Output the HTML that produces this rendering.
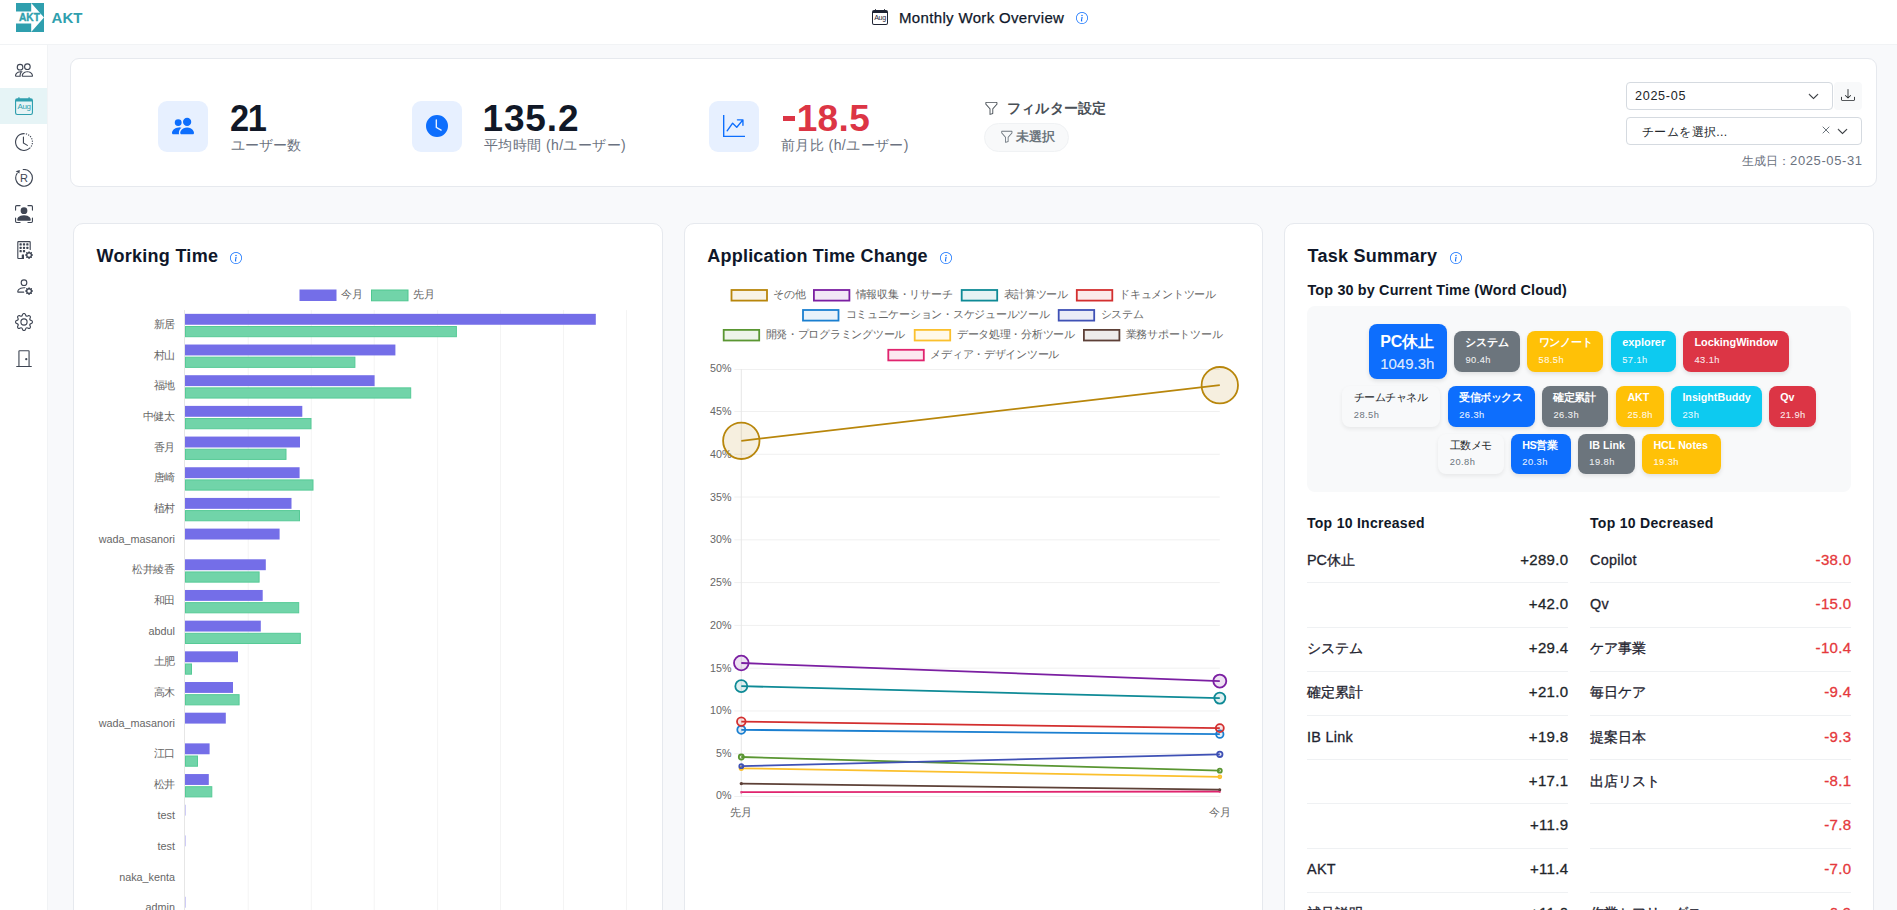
<!DOCTYPE html>
<html lang="ja">
<head>
<meta charset="utf-8">
<title>Monthly Work Overview</title>
<style>
*{box-sizing:border-box;margin:0;padding:0}
html,body{width:1897px;height:910px;overflow:hidden;background:#f8f9fb;font-family:"Liberation Sans",sans-serif;color:#111827}
.abs{position:absolute}
#root{position:relative;width:1897px;height:910px;overflow:hidden;background:#f8f9fb}
#hdr{left:0;top:0;width:1897px;height:45px;background:#fff;border-bottom:1px solid #f1f3f5}
#side{left:0;top:45px;width:48px;height:865px;background:#fff;border-right:1px solid #f1f3f5}
.sic{position:absolute;left:0;width:47px;height:36px}
.sic svg{position:absolute;left:15px;top:9px;width:18px;height:18px;fill:#3f4654}
.sic.act{background:#e6f4f6}
.sic.act svg{fill:#2f9fae}
.card{position:absolute;background:#fff;border:1px solid #e6e9ee;border-radius:10px}
.ibox{position:absolute;width:50px;height:51px;border-radius:9px;background:#e7f0ff}
.ibox svg{position:absolute;left:14px;top:14px;width:22px;height:22px;fill:#0d6efd}
.num{position:absolute;font-weight:700;font-size:37px;line-height:40px;color:#111827;white-space:nowrap;letter-spacing:-1px}
.lbl{position:absolute;font-size:14px;line-height:18px;color:#6b7280;white-space:nowrap}
.h2{position:absolute;font-weight:700;font-size:18px;line-height:24px;color:#0f172a;white-space:nowrap}
.info{position:absolute;width:12px;height:12px;fill:#0d6efd}
.t{position:absolute;white-space:nowrap}
.th{font-size:14px;line-height:18px;font-weight:700;color:#111827}
.tn{font-size:14.4px;line-height:20px;color:#1f2430;-webkit-text-stroke:.3px #1f2430}
.tv{font-size:15px;line-height:20px;letter-spacing:.3px;margin-right:-.3px;-webkit-text-stroke:.3px}
.tag{overflow:hidden}
</style>
</head>
<body>
<div id="root">
<!-- HEADER -->
<div id="hdr" class="abs">
<svg class="abs" style="left:16px;top:3px" width="28" height="29" viewBox="0 0 28 29"><rect width="28" height="29" fill="#2f9fae"/><path d="M0 8.6H15.2V0L28 14.5 15.2 29V20.4H0Z" fill="#fff"/><text x="13.4" y="18.3" font-family="Liberation Sans, sans-serif" font-weight="700" font-size="10.2" fill="#2f9fae" stroke="#2f9fae" stroke-width=".35" text-anchor="middle">AKT</text></svg>
<div class="t" style="left:51.6px;top:9px;font-size:15px;line-height:18px;font-weight:700;color:#2f9fae;letter-spacing:0">AKT</div>
<svg class="abs" style="left:872px;top:9px" width="16" height="16" viewBox="0 0 16 16"><path d="M3.5 0a.5.5 0 0 1 .5.5V1h8V.5a.5.5 0 0 1 1 0V1h1a2 2 0 0 1 2 2v11a2 2 0 0 1-2 2H2a2 2 0 0 1-2-2V3a2 2 0 0 1 2-2h1V.5a.5.5 0 0 1 .5-.5M1 4v10a1 1 0 0 0 1 1h12a1 1 0 0 0 1-1V4z" fill="#1f2433"/><text x="8" y="10.7" font-family="Liberation Sans, sans-serif" font-size="7.1" fill="#1f2433" text-anchor="middle" letter-spacing="-.4">Aug</text></svg>
<div class="t" id="ttl" style="left:899px;top:8px;font-size:15px;line-height:20px;color:#0f172a;letter-spacing:.34px;-webkit-text-stroke:.25px #0f172a">Monthly Work Overview</div>
<svg class="info" style="left:1076px;top:12.3px" viewBox="0 0 16 16"><path d="M8 15A7 7 0 1 1 8 1a7 7 0 0 1 0 14m0 1A8 8 0 1 0 8 0a8 8 0 0 0 0 16"/><path d="m8.93 6.588-2.29.287-.082.38.45.083c.294.07.352.176.288.469l-.738 3.468c-.194.897.105 1.319.808 1.319.545 0 1.178-.252 1.465-.598l.088-.416c-.2.176-.492.246-.686.246-.275 0-.375-.193-.304-.533zM9 4.5a1 1 0 1 1-2 0 1 1 0 0 1 2 0"/></svg>
</div>
<!-- SIDEBAR -->
<div id="side" class="abs">
<div class="sic" style="top:7px"><svg viewBox="0 0 16 16"><path d="M15 14s1 0 1-1-1-4-5-4-5 3-5 4 1 1 1 1zm-7.978-1L7 12.996c.001-.264.167-1.03.76-1.72C8.312 10.629 9.282 10 11 10c1.717 0 2.687.63 3.24 1.276.593.69.758 1.457.76 1.72l-.008.002-.014.002zM11 7a2 2 0 1 0 0-4 2 2 0 0 0 0 4m3-2a3 3 0 1 1-6 0 3 3 0 0 1 6 0M6.936 9.28a6 6 0 0 0-1.23-.247A7 7 0 0 0 5 9c-4 0-5 3-5 4q0 1 1 1h4.216A2.24 2.24 0 0 1 5 13c0-1.01.377-2.042 1.09-2.904.243-.294.526-.569.846-.816M4.92 10A5.5 5.5 0 0 0 4 13H1c0-.26.164-1.03.76-1.724.545-.636 1.492-1.256 3.16-1.275ZM1.5 5.5a3 3 0 1 1 6 0 3 3 0 0 1-6 0m3-2a2 2 0 1 0 0 4 2 2 0 0 0 0-4"/></svg></div>
<div class="sic act" style="top:43px"><svg viewBox="0 0 16 16"><path d="M3.5 0a.5.5 0 0 1 .5.5V1h8V.5a.5.5 0 0 1 1 0V1h1a2 2 0 0 1 2 2v11a2 2 0 0 1-2 2H2a2 2 0 0 1-2-2V3a2 2 0 0 1 2-2h1V.5a.5.5 0 0 1 .5-.5M1 4v10a1 1 0 0 0 1 1h12a1 1 0 0 0 1-1V4z"/><text x="8" y="10.7" font-family="Liberation Sans, sans-serif" font-size="7.1" text-anchor="middle" letter-spacing="-.4">Aug</text></svg></div>
<div class="sic" style="top:79px"><svg viewBox="0 0 16 16"><path d="M8.515 1.019A7 7 0 0 0 8 1V0a8 8 0 0 1 .589.022zm2.004.45a7 7 0 0 0-.985-.299l.219-.976q.576.129 1.126.342zm1.37.71a7 7 0 0 0-.439-.27l.493-.87a8 8 0 0 1 .979.654l-.615.789a7 7 0 0 0-.418-.302zm1.834 1.79a7 7 0 0 0-.653-.796l.724-.69q.406.429.747.91zm.744 1.352a7 7 0 0 0-.214-.468l.893-.45a8 8 0 0 1 .45 1.088l-.95.313a7 7 0 0 0-.179-.483m.53 2.507a7 7 0 0 0-.1-1.025l.985-.17q.1.58.116 1.17zm-.131 1.538q.05-.254.081-.51l.993.123a8 8 0 0 1-.23 1.155l-.964-.267q.069-.247.12-.501m-.952 2.379q.276-.436.486-.908l.914.405q-.24.54-.555 1.038zm-.964 1.205q.183-.183.35-.378l.758.653a8 8 0 0 1-.401.432z"/><path d="M8 1a7 7 0 1 0 4.95 11.95l.707.707A8.001 8.001 0 1 1 8 0z"/><path d="M7.5 3a.5.5 0 0 1 .5.5v5.21l3.248 1.856a.5.5 0 0 1-.496.868l-3.5-2A.5.5 0 0 1 7 9V3.5a.5.5 0 0 1 .5-.5"/></svg></div>
<div class="sic" style="top:115px"><svg viewBox="0 0 16 16"><path d="M7.3.5A7.4 7.4 0 1 1 1.9 3.75" fill="none" stroke="#3f4654" stroke-width="1" stroke-linecap="round"/><path d="M.6 2 4.3.85 3.9 3.95z"/><text x="8" y="11.4" font-family="Liberation Sans, sans-serif" font-size="9.8" text-anchor="middle">R</text></svg></div>
<div class="sic" style="top:151px"><svg viewBox="0 0 16 16"><path d="M1.5 1a.5.5 0 0 0-.5.5v3a.5.5 0 0 1-1 0v-3A1.5 1.5 0 0 1 1.5 0h3a.5.5 0 0 1 0 1zM11 .5a.5.5 0 0 1 .5-.5h3A1.5 1.5 0 0 1 16 1.5v3a.5.5 0 0 1-1 0v-3a.5.5 0 0 0-.5-.5h-3a.5.5 0 0 1-.5-.5M.5 11a.5.5 0 0 1 .5.5v3a.5.5 0 0 0 .5.5h3a.5.5 0 0 1 0 1h-3A1.5 1.5 0 0 1 0 14.5v-3a.5.5 0 0 1 .5-.5m15 0a.5.5 0 0 1 .5.5v3a1.5 1.5 0 0 1-1.5 1.5h-3a.5.5 0 0 1 0-1h3a.5.5 0 0 0 .5-.5v-3a.5.5 0 0 1 .5-.5"/><path d="M3 14s-1 0-1-1 1-4 6-4 6 3 6 4-1 1-1 1zm8-9a3 3 0 1 1-6 0 3 3 0 0 1 6 0"/></svg></div>
<div class="sic" style="top:187px"><svg viewBox="0 0 16 16"><path d="M2 1a1 1 0 0 1 1-1h10a1 1 0 0 1 1 1v6.5a.5.5 0 0 1-1 0V1H3v14h3v-2.5a.5.5 0 0 1 .5-.5H8v4H3a1 1 0 0 1-1-1z"/><path d="M4.5 2a.5.5 0 0 0-.5.5v1a.5.5 0 0 0 .5.5h1a.5.5 0 0 0 .5-.5v-1a.5.5 0 0 0-.5-.5zm3 0a.5.5 0 0 0-.5.5v1a.5.5 0 0 0 .5.5h1a.5.5 0 0 0 .5-.5v-1a.5.5 0 0 0-.5-.5zm3 0a.5.5 0 0 0-.5.5v1a.5.5 0 0 0 .5.5h1a.5.5 0 0 0 .5-.5v-1a.5.5 0 0 0-.5-.5zm-6 3a.5.5 0 0 0-.5.5v1a.5.5 0 0 0 .5.5h1a.5.5 0 0 0 .5-.5v-1a.5.5 0 0 0-.5-.5zm3 0a.5.5 0 0 0-.5.5v1a.5.5 0 0 0 .5.5h1a.5.5 0 0 0 .5-.5v-1a.5.5 0 0 0-.5-.5zm3 0a.5.5 0 0 0-.5.5v1a.5.5 0 0 0 .5.5h1a.5.5 0 0 0 .5-.5v-1a.5.5 0 0 0-.5-.5zm-6 3a.5.5 0 0 0-.5.5v1a.5.5 0 0 0 .5.5h1a.5.5 0 0 0 .5-.5v-1a.5.5 0 0 0-.5-.5zm3 0a.5.5 0 0 0-.5.5v1a.5.5 0 0 0 .5.5h1a.5.5 0 0 0 .5-.5v-1a.5.5 0 0 0-.5-.5zm4.386 1.46c.18-.613 1.048-.613 1.229 0l.043.148a.64.64 0 0 0 .921.382l.136-.074c.561-.306 1.175.308.87.869l-.075.136a.64.64 0 0 0 .382.92l.149.045c.612.18.612 1.048 0 1.229l-.15.043a.64.64 0 0 0-.38.921l.074.136c.305.561-.309 1.175-.87.87l-.136-.075a.64.64 0 0 0-.92.382l-.045.149c-.18.612-1.048.612-1.229 0l-.043-.15a.64.64 0 0 0-.921-.38l-.136.074c-.561.305-1.175-.309-.87-.87l.075-.136a.64.64 0 0 0-.382-.92l-.148-.045c-.613-.18-.613-1.048 0-1.229l.148-.043a.64.64 0 0 0 .382-.921l-.074-.136c-.306-.561.308-1.175.869-.87l.136.075a.64.64 0 0 0 .92-.382zM14 12.5a1.5 1.5 0 1 0-3 0 1.5 1.5 0 0 0 3 0"/></svg></div>
<div class="sic" style="top:223px"><svg viewBox="0 0 16 16"><path d="M11 5a3 3 0 1 1-6 0 3 3 0 0 1 6 0M8 7a2 2 0 1 0 0-4 2 2 0 0 0 0 4m.256 7a4.5 4.5 0 0 1-.229-1.004H3c.001-.246.154-.986.832-1.664C4.484 10.68 5.711 10 8 10q.39 0 .74.025c.226-.341.496-.65.804-.918Q8.844 9.002 8 9c-5 0-6 3-6 4s1 1 1 1zm3.63-4.54c.18-.613 1.048-.613 1.229 0l.043.148a.64.64 0 0 0 .921.382l.136-.074c.561-.306 1.175.308.87.869l-.075.136a.64.64 0 0 0 .382.92l.149.045c.612.18.612 1.048 0 1.229l-.15.043a.64.64 0 0 0-.38.921l.074.136c.305.561-.309 1.175-.87.87l-.136-.075a.64.64 0 0 0-.92.382l-.045.149c-.18.612-1.048.612-1.229 0l-.043-.15a.64.64 0 0 0-.921-.38l-.136.074c-.561.305-1.175-.309-.87-.87l.075-.136a.64.64 0 0 0-.382-.92l-.148-.045c-.613-.18-.613-1.048 0-1.229l.148-.043a.64.64 0 0 0 .382-.921l-.074-.136c-.306-.561.308-1.175.869-.87l.136.075a.64.64 0 0 0 .92-.382zM14 12.5a1.5 1.5 0 1 0-3 0 1.5 1.5 0 0 0 3 0"/></svg></div>
<div class="sic" style="top:259px"><svg viewBox="0 0 16 16"><path d="M8 4.754a3.246 3.246 0 1 0 0 6.492 3.246 3.246 0 0 0 0-6.492M5.754 8a2.246 2.246 0 1 1 4.492 0 2.246 2.246 0 0 1-4.492 0"/><path d="M9.796 1.343c-.527-1.79-3.065-1.79-3.592 0l-.094.319a.873.873 0 0 1-1.255.52l-.292-.16c-1.64-.892-3.433.902-2.54 2.541l.159.292a.873.873 0 0 1-.52 1.255l-.319.094c-1.79.527-1.79 3.065 0 3.592l.319.094a.873.873 0 0 1 .52 1.255l-.16.292c-.892 1.64.901 3.434 2.541 2.54l.292-.159a.873.873 0 0 1 1.255.52l.094.319c.527 1.79 3.065 1.79 3.592 0l.094-.319a.873.873 0 0 1 1.255-.52l.292.16c1.64.893 3.434-.902 2.54-2.541l-.159-.292a.873.873 0 0 1 .52-1.255l.319-.094c1.79-.527 1.79-3.065 0-3.592l-.319-.094a.873.873 0 0 1-.52-1.255l.16-.292c.893-1.64-.902-3.433-2.541-2.54l-.292.159a.873.873 0 0 1-1.255-.52zm-2.633.283c.246-.835 1.428-.835 1.674 0l.094.319a1.873 1.873 0 0 0 2.693 1.115l.291-.16c.764-.415 1.6.42 1.184 1.185l-.159.292a1.873 1.873 0 0 0 1.116 2.692l.318.094c.835.246.835 1.428 0 1.674l-.319.094a1.873 1.873 0 0 0-1.115 2.693l.16.291c.415.764-.42 1.6-1.185 1.184l-.291-.159a1.873 1.873 0 0 0-2.693 1.116l-.094.318c-.246.835-1.428.835-1.674 0l-.094-.319a1.873 1.873 0 0 0-2.692-1.115l-.292.16c-.764.415-1.6-.42-1.184-1.185l.159-.291A1.873 1.873 0 0 0 1.945 8.93l-.319-.094c-.835-.246-.835-1.428 0-1.674l.319-.094A1.873 1.873 0 0 0 3.06 4.377l-.16-.292c-.415-.764.42-1.6 1.185-1.184l.292.159a1.873 1.873 0 0 0 2.692-1.115z"/></svg></div>
<div class="sic" style="top:295px"><svg viewBox="0 0 16 16"><path d="M3 2a1 1 0 0 1 1-1h8a1 1 0 0 1 1 1v13h1.5a.5.5 0 0 1 0 1h-13a.5.5 0 0 1 0-1H3zm1 13h8V2H4z"/><path d="M9 9a1 1 0 1 0 2 0 1 1 0 0 0-2 0"/></svg></div>
</div>
<!-- STATS CARD -->
<div class="card" id="stats" style="left:70px;top:58px;width:1807px;height:129px;border-radius:9px">
<div class="ibox" style="left:87px;top:42px"><svg viewBox="0 0 16 16"><path d="M7 14s-1 0-1-1 1-4 5-4 5 3 5 4-1 1-1 1zm4-6a3 3 0 1 0 0-6 3 3 0 0 0 0 6m-5.784 6A2.24 2.24 0 0 1 5 13c0-1.355.68-2.75 1.936-3.72A6.3 6.3 0 0 0 5 9c-4 0-5 3-5 4s1 1 1 1zM4.5 8a2.5 2.5 0 1 0 0-5 2.5 2.5 0 0 0 0 5"/></svg></div>
<div class="num" id="n1" style="left:159px;top:40px;letter-spacing:-1.6px;transform:scaleX(.93);transform-origin:0 0">21</div>
<div class="lbl" id="l1" style="left:160px;top:77px">ユーザー数</div>
<div class="ibox" style="left:341px;top:42px"><svg viewBox="0 0 16 16"><path d="M16 8A8 8 0 1 1 0 8a8 8 0 0 1 16 0M8 3.5a.5.5 0 0 0-1 0V9a.5.5 0 0 0 .252.434l3.5 2a.5.5 0 0 0 .496-.868L8 8.71z"/></svg></div>
<div class="num" id="n2" style="left:411.5px;top:40px;letter-spacing:.85px">135.2</div>
<div class="lbl" id="l2" style="left:413px;top:77.4px;letter-spacing:.4px">平均時間 (h/ユーザー)</div>
<div class="ibox" style="left:638px;top:42px"><svg viewBox="0 0 16 16"><path fill-rule="evenodd" d="M0 0h1v15h15v1H0zm10 3.5a.5.5 0 0 1 .5-.5h4a.5.5 0 0 1 .5.5v4a.5.5 0 0 1-1 0V4.9l-3.613 4.417a.5.5 0 0 1-.74.037L7.06 6.767l-3.656 5.027a.5.5 0 0 1-.808-.588l4-5.5a.5.5 0 0 1 .758-.06l2.609 2.61L13.445 4H10.5a.5.5 0 0 1-.5-.5"/></svg></div>
<div class="num" id="n3" style="left:709.5px;top:40px;letter-spacing:.4px;color:#dc3545"><span style="display:inline-block;width:12px;height:4.8px;background:#dc3545;vertical-align:10.5px;margin-left:2.4px;margin-right:1.75px"></span>18.5</div>
<div class="lbl" id="l3" style="left:710px;top:77.4px;letter-spacing:.42px">前月比 (h/ユーザー)</div>
<svg class="abs" style="left:912.8px;top:41.9px;fill:#495057" width="14.8" height="14.8" viewBox="0 0 16 16"><path d="M1.5 1.5A.5.5 0 0 1 2 1h12a.5.5 0 0 1 .5.5v2a.5.5 0 0 1-.128.334L10 8.692V13.5a.5.5 0 0 1-.342.474l-3 1A.5.5 0 0 1 6 14.5V8.692L1.628 3.834A.5.5 0 0 1 1.5 3.5zm1 .5v1.308l4.372 4.858A.5.5 0 0 1 7 8.5v5.306l2-.666V8.5a.5.5 0 0 1 .128-.334L13.5 3.308V2z"/></svg>
<div class="t" id="flt" style="left:936px;top:40px;font-size:14px;line-height:18px;font-weight:700;color:#495057;letter-spacing:.2px">フィルター設定</div>
<div class="abs" style="left:913px;top:64px;width:85px;height:29px;border-radius:15px;background:#f8f9fa;border:1px solid #f0f2f4"></div>
<svg class="abs" style="left:928.5px;top:71.2px;fill:#6c757d" width="13.7" height="13.7" viewBox="0 0 16 16"><path d="M1.5 1.5A.5.5 0 0 1 2 1h12a.5.5 0 0 1 .5.5v2a.5.5 0 0 1-.128.334L10 8.692V13.5a.5.5 0 0 1-.342.474l-3 1A.5.5 0 0 1 6 14.5V8.692L1.628 3.834A.5.5 0 0 1 1.5 3.5zm1 .5v1.308l4.372 4.858A.5.5 0 0 1 7 8.5v5.306l2-.666V8.5a.5.5 0 0 1 .128-.334L13.5 3.308V2z"/></svg>
<div class="t" id="unsel" style="left:945px;top:70px;font-size:12.5px;line-height:16px;font-weight:700;color:#6c757d">未選択</div>
<div class="abs" style="left:1555px;top:23px;width:207px;height:28px;border:1px solid #d5dae0;border-radius:4px;background:#fff"></div>
<div class="t" id="ym" style="left:1564px;top:29px;font-size:12.6px;line-height:16px;color:#212529;letter-spacing:.7px">2025-05</div>
<svg class="abs" style="left:1737px;top:32px;fill:#212529;stroke:#212529;stroke-width:.6" width="11" height="11" viewBox="0 0 16 16"><path fill-rule="evenodd" d="M1.646 4.646a.5.5 0 0 1 .708 0L8 10.293l5.646-5.647a.5.5 0 0 1 .708.708l-6 6a.5.5 0 0 1-.708 0l-6-6a.5.5 0 0 1 0-.708"/></svg>
<div class="abs" style="left:1763px;top:23px;width:28px;height:28px;border-radius:4px;background:#f8f9fa"></div>
<svg class="abs" style="left:1770px;top:29px;fill:#212529" width="14" height="14" viewBox="0 0 16 16"><path d="M.5 9.9a.5.5 0 0 1 .5.5v2.5a1 1 0 0 0 1 1h12a1 1 0 0 0 1-1v-2.5a.5.5 0 0 1 1 0v2.5a2 2 0 0 1-2 2H2a2 2 0 0 1-2-2v-2.5a.5.5 0 0 1 .5-.5"/><path d="M7.646 11.854a.5.5 0 0 0 .708 0l3-3a.5.5 0 0 0-.708-.708L8.5 10.293V1.5a.5.5 0 0 0-1 0v8.793L5.354 8.146a.5.5 0 1 0-.708.708z"/></svg>
<div class="abs" style="left:1555px;top:58px;width:236px;height:28px;border:1px solid #d5dae0;border-radius:4px;background:#fff"></div>
<div class="t" id="team" style="left:1571px;top:64px;font-size:12.25px;line-height:16px;color:#212529;letter-spacing:.38px;margin-top:.8px">チームを選択...</div>
<svg class="abs" style="left:1751px;top:67px" width="8" height="8" viewBox="0 0 8 8"><path d="M.7.7 7.3 7.3M7.3.7.7 7.3" stroke="#6c757d" stroke-width="1" fill="none"/></svg>
<svg class="abs" style="left:1766px;top:67px;fill:#212529;stroke:#212529;stroke-width:.6" width="11" height="11" viewBox="0 0 16 16"><path fill-rule="evenodd" d="M1.646 4.646a.5.5 0 0 1 .708 0L8 10.293l5.646-5.647a.5.5 0 0 1 .708.708l-6 6a.5.5 0 0 1-.708 0l-6-6a.5.5 0 0 1 0-.708"/></svg>
<div class="t" id="gen" style="right:14px;top:93.8px;font-size:12.25px;line-height:16px;color:#6b7280">生成日：<span style="font-size:13px;letter-spacing:.6px;margin-right:-.6px">2025-05-31</span></div>
</div>
<!-- PANELS -->
<div class="card" id="p1" style="left:73px;top:223px;width:590px;height:720px">
<div class="h2" id="h1" style="left:22.5px;top:19.5px;letter-spacing:.28px">Working Time</div>
<svg class="info" style="left:156px;top:28px" viewBox="0 0 16 16"><path d="M8 15A7 7 0 1 1 8 1a7 7 0 0 1 0 14m0 1A8 8 0 1 0 8 0a8 8 0 0 0 0 16"/><path d="m8.93 6.588-2.29.287-.082.38.45.083c.294.07.352.176.288.469l-.738 3.468c-.194.897.105 1.319.808 1.319.545 0 1.178-.252 1.465-.598l.088-.416c-.2.176-.492.246-.686.246-.275 0-.375-.193-.304-.533zM9 4.5a1 1 0 1 1-2 0 1 1 0 0 1 2 0"/></svg>
<svg class="abs" style="left:0;top:0" width="588" height="690" viewBox="74 224 588 690" font-family="Liberation Sans, sans-serif">
<rect x="184.00" y="310.1" width="1" height="620" fill="#e6e6e6"/>
<rect x="247.70" y="310.1" width="1" height="620" fill="#f4f4f4"/>
<rect x="310.80" y="310.1" width="1" height="620" fill="#f4f4f4"/>
<rect x="373.70" y="310.1" width="1" height="620" fill="#f4f4f4"/>
<rect x="437.10" y="310.1" width="1" height="620" fill="#f4f4f4"/>
<rect x="500.00" y="310.1" width="1" height="620" fill="#f4f4f4"/>
<rect x="563.00" y="310.1" width="1" height="620" fill="#f4f4f4"/>
<rect x="626.00" y="310.1" width="1" height="620" fill="#f4f4f4"/>
<rect x="299.5" y="289.5" width="37" height="11.5" fill="#746ee8"/>
<text x="341.3" y="298.3" font-size="10.7" fill="#666">今月</text>
<rect x="371.5" y="290" width="36.5" height="10.8" fill="#71d4a9" stroke="#4fc790" stroke-width="1"/>
<text x="413" y="298.3" font-size="10.7" fill="#666">先月</text>
<rect x="185.0" y="313.85" width="410.8" height="10.9" fill="#746ee8"/>
<rect x="185.5" y="326.50" width="270.9" height="10.2" fill="#71d4a9" stroke="#56ca96" stroke-width="1"/>
<text x="175" y="327.94" font-size="10.8" fill="#666" text-anchor="end" textLength="21.4" lengthAdjust="spacing">新居</text>
<rect x="185.0" y="344.53" width="210.4" height="10.9" fill="#746ee8"/>
<rect x="185.5" y="357.18" width="169.4" height="10.2" fill="#71d4a9" stroke="#56ca96" stroke-width="1"/>
<text x="175" y="358.62" font-size="10.8" fill="#666" text-anchor="end" textLength="21.4" lengthAdjust="spacing">村山</text>
<rect x="185.0" y="375.21" width="189.6" height="10.9" fill="#746ee8"/>
<rect x="185.5" y="387.86" width="225.2" height="10.2" fill="#71d4a9" stroke="#56ca96" stroke-width="1"/>
<text x="175" y="389.30" font-size="10.8" fill="#666" text-anchor="end" textLength="21.4" lengthAdjust="spacing">福地</text>
<rect x="185.0" y="405.89" width="117.3" height="10.9" fill="#746ee8"/>
<rect x="185.5" y="418.54" width="125.5" height="10.2" fill="#71d4a9" stroke="#56ca96" stroke-width="1"/>
<text x="175" y="419.98" font-size="10.8" fill="#666" text-anchor="end" textLength="32.2" lengthAdjust="spacing">中健太</text>
<rect x="185.0" y="436.57" width="115.0" height="10.9" fill="#746ee8"/>
<rect x="185.5" y="449.22" width="100.5" height="10.2" fill="#71d4a9" stroke="#56ca96" stroke-width="1"/>
<text x="175" y="450.66" font-size="10.8" fill="#666" text-anchor="end" textLength="21.4" lengthAdjust="spacing">香月</text>
<rect x="185.0" y="467.25" width="114.6" height="10.9" fill="#746ee8"/>
<rect x="185.5" y="479.90" width="127.5" height="10.2" fill="#71d4a9" stroke="#56ca96" stroke-width="1"/>
<text x="175" y="481.34" font-size="10.8" fill="#666" text-anchor="end" textLength="21.4" lengthAdjust="spacing">唐崎</text>
<rect x="185.0" y="497.93" width="106.5" height="10.9" fill="#746ee8"/>
<rect x="185.5" y="510.58" width="114.0" height="10.2" fill="#71d4a9" stroke="#56ca96" stroke-width="1"/>
<text x="175" y="512.02" font-size="10.8" fill="#666" text-anchor="end" textLength="21.4" lengthAdjust="spacing">植村</text>
<rect x="185.0" y="528.61" width="94.6" height="10.9" fill="#746ee8"/>
<rect x="185.5" y="541.26" width="-1.0" height="10.2" fill="#71d4a9" stroke="#56ca96" stroke-width="1"/>
<text x="175" y="543.30" font-size="10.8" fill="#666" text-anchor="end">wada_masanori</text>
<rect x="185.0" y="559.29" width="80.8" height="10.9" fill="#746ee8"/>
<rect x="185.5" y="571.94" width="73.6" height="10.2" fill="#71d4a9" stroke="#56ca96" stroke-width="1"/>
<text x="175" y="573.38" font-size="10.8" fill="#666" text-anchor="end" textLength="42.9" lengthAdjust="spacing">松井綾香</text>
<rect x="185.0" y="589.97" width="77.7" height="10.9" fill="#746ee8"/>
<rect x="185.5" y="602.62" width="113.2" height="10.2" fill="#71d4a9" stroke="#56ca96" stroke-width="1"/>
<text x="175" y="604.06" font-size="10.8" fill="#666" text-anchor="end" textLength="21.4" lengthAdjust="spacing">和田</text>
<rect x="185.0" y="620.65" width="75.8" height="10.9" fill="#746ee8"/>
<rect x="185.5" y="633.30" width="114.8" height="10.2" fill="#71d4a9" stroke="#56ca96" stroke-width="1"/>
<text x="175" y="635.34" font-size="10.8" fill="#666" text-anchor="end">abdul</text>
<rect x="185.0" y="651.33" width="53.0" height="10.9" fill="#746ee8"/>
<rect x="185.5" y="663.98" width="6.0" height="10.2" fill="#71d4a9" stroke="#56ca96" stroke-width="1"/>
<text x="175" y="665.42" font-size="10.8" fill="#666" text-anchor="end" textLength="21.4" lengthAdjust="spacing">土肥</text>
<rect x="185.0" y="682.01" width="48.0" height="10.9" fill="#746ee8"/>
<rect x="185.5" y="694.66" width="53.6" height="10.2" fill="#71d4a9" stroke="#56ca96" stroke-width="1"/>
<text x="175" y="696.10" font-size="10.8" fill="#666" text-anchor="end" textLength="21.4" lengthAdjust="spacing">高木</text>
<rect x="185.0" y="712.69" width="40.8" height="10.9" fill="#746ee8"/>
<text x="175" y="727.38" font-size="10.8" fill="#666" text-anchor="end">wada_masanori</text>
<rect x="185.0" y="743.37" width="24.6" height="10.9" fill="#746ee8"/>
<rect x="185.5" y="756.02" width="12.0" height="10.2" fill="#71d4a9" stroke="#56ca96" stroke-width="1"/>
<text x="175" y="757.46" font-size="10.8" fill="#666" text-anchor="end" textLength="21.4" lengthAdjust="spacing">江口</text>
<rect x="185.0" y="774.05" width="23.8" height="10.9" fill="#746ee8"/>
<rect x="185.5" y="786.70" width="26.3" height="10.2" fill="#71d4a9" stroke="#56ca96" stroke-width="1"/>
<text x="175" y="788.14" font-size="10.8" fill="#666" text-anchor="end" textLength="21.4" lengthAdjust="spacing">松井</text>
<rect x="185.0" y="804.73" width="1.0" height="10.9" fill="#746ee8" opacity=".35"/>
<text x="175" y="819.42" font-size="10.8" fill="#666" text-anchor="end">test</text>
<rect x="185.0" y="835.41" width="1.0" height="10.9" fill="#746ee8" opacity=".35"/>
<text x="175" y="850.10" font-size="10.8" fill="#666" text-anchor="end">test</text>
<text x="175" y="880.78" font-size="10.8" fill="#666" text-anchor="end">naka_kenta</text>
<rect x="185.0" y="896.77" width="1.0" height="10.9" fill="#746ee8" opacity=".35"/>
<text x="175" y="911.46" font-size="10.8" fill="#666" text-anchor="end">admin</text>
</svg>
</div>
<div class="card" id="p2" style="left:684px;top:223px;width:579px;height:720px">
<div class="h2" id="h2" style="left:22.299999999999955px;top:19.5px;letter-spacing:.21px">Application Time Change</div>
<svg class="info" style="left:255px;top:28px" viewBox="0 0 16 16"><path d="M8 15A7 7 0 1 1 8 1a7 7 0 0 1 0 14m0 1A8 8 0 1 0 8 0a8 8 0 0 0 0 16"/><path d="m8.93 6.588-2.29.287-.082.38.45.083c.294.07.352.176.288.469l-.738 3.468c-.194.897.105 1.319.808 1.319.545 0 1.178-.252 1.465-.598l.088-.416c-.2.176-.492.246-.686.246-.275 0-.375-.193-.304-.533zM9 4.5a1 1 0 1 1-2 0 1 1 0 0 1 2 0"/></svg>
<svg class="abs" style="left:0;top:0" width="577" height="690" viewBox="685 224 577 690" font-family="Liberation Sans, sans-serif">
<rect x="734.3" y="796.00" width="485.5" height="1" fill="#f0f0f0"/>
<text x="731.5" y="799.00" font-size="10.7" fill="#666" text-anchor="end">0%</text>
<rect x="734.3" y="753.22" width="485.5" height="1" fill="#f0f0f0"/>
<text x="731.5" y="757.22" font-size="10.7" fill="#666" text-anchor="end">5%</text>
<rect x="734.3" y="710.44" width="485.5" height="1" fill="#f0f0f0"/>
<text x="731.5" y="714.44" font-size="10.7" fill="#666" text-anchor="end">10%</text>
<rect x="734.3" y="667.66" width="485.5" height="1" fill="#f0f0f0"/>
<text x="731.5" y="671.66" font-size="10.7" fill="#666" text-anchor="end">15%</text>
<rect x="734.3" y="624.88" width="485.5" height="1" fill="#f0f0f0"/>
<text x="731.5" y="628.88" font-size="10.7" fill="#666" text-anchor="end">20%</text>
<rect x="734.3" y="582.10" width="485.5" height="1" fill="#f0f0f0"/>
<text x="731.5" y="586.10" font-size="10.7" fill="#666" text-anchor="end">25%</text>
<rect x="734.3" y="539.32" width="485.5" height="1" fill="#f0f0f0"/>
<text x="731.5" y="543.32" font-size="10.7" fill="#666" text-anchor="end">30%</text>
<rect x="734.3" y="496.54" width="485.5" height="1" fill="#f0f0f0"/>
<text x="731.5" y="500.54" font-size="10.7" fill="#666" text-anchor="end">35%</text>
<rect x="734.3" y="453.76" width="485.5" height="1" fill="#f0f0f0"/>
<text x="731.5" y="457.76" font-size="10.7" fill="#666" text-anchor="end">40%</text>
<rect x="734.3" y="410.98" width="485.5" height="1" fill="#f0f0f0"/>
<text x="731.5" y="414.98" font-size="10.7" fill="#666" text-anchor="end">45%</text>
<rect x="734.3" y="368.96" width="485.5" height="1" fill="#f0f0f0"/>
<text x="731.5" y="371.96" font-size="10.7" fill="#666" text-anchor="end">50%</text>
<rect x="740.8" y="369" width="1" height="428.0" fill="#e6e6e6"/>
<text x="741.3" y="815.7" font-size="10.7" fill="#666" text-anchor="middle">先月</text>
<text x="1219.8" y="815.7" font-size="10.7" fill="#666" text-anchor="middle">今月</text>
<rect x="731.5" y="290.0" width="35.5" height="10.6" fill="rgba(184,134,11,0.1)" stroke="#b8860b" stroke-width="1.8"/>
<text x="773.3" y="297.8" font-size="10.72" fill="#666" textLength="32.2" lengthAdjust="spacing">その他</text>
<rect x="813.9" y="290.0" width="35.5" height="10.6" fill="rgba(123,31,162,0.1)" stroke="#7b1fa2" stroke-width="1.8"/>
<text x="855.7" y="297.8" font-size="10.72" fill="#666" textLength="96.8" lengthAdjust="spacing">情報収集・リサーチ</text>
<rect x="961.7" y="290.0" width="35.5" height="10.6" fill="rgba(14,138,150,0.1)" stroke="#0e8a96" stroke-width="1.8"/>
<text x="1003.5" y="297.8" font-size="10.72" fill="#666" textLength="64.5" lengthAdjust="spacing">表計算ツール</text>
<rect x="1076.8" y="290.0" width="35.5" height="10.6" fill="rgba(211,47,47,0.1)" stroke="#d32f2f" stroke-width="1.8"/>
<text x="1119.2" y="297.8" font-size="10.72" fill="#666" textLength="96.8" lengthAdjust="spacing">ドキュメントツール</text>
<rect x="803.0" y="310.0" width="35.5" height="10.6" fill="rgba(26,127,208,0.1)" stroke="#1a7fd0" stroke-width="1.8"/>
<text x="845.5" y="317.8" font-size="10.72" fill="#666" textLength="204.2" lengthAdjust="spacing">コミュニケーション・スケジュールツール</text>
<rect x="1058.7" y="310.0" width="35.5" height="10.6" fill="rgba(63,81,181,0.1)" stroke="#3f51b5" stroke-width="1.8"/>
<text x="1100.5" y="317.8" font-size="10.72" fill="#666" textLength="43.0" lengthAdjust="spacing">システム</text>
<rect x="723.7" y="329.9" width="35.5" height="10.6" fill="rgba(90,150,50,0.1)" stroke="#5a9632" stroke-width="1.8"/>
<text x="765.5" y="337.7" font-size="10.72" fill="#666" textLength="139.8" lengthAdjust="spacing">開発・プログラミングツール</text>
<rect x="914.7" y="329.9" width="35.5" height="10.6" fill="rgba(251,192,45,0.1)" stroke="#fbc02d" stroke-width="1.8"/>
<text x="956.8" y="337.7" font-size="10.72" fill="#666" textLength="118.2" lengthAdjust="spacing">データ処理・分析ツール</text>
<rect x="1083.9" y="329.9" width="35.5" height="10.6" fill="rgba(93,64,55,0.1)" stroke="#5d4037" stroke-width="1.8"/>
<text x="1125.7" y="337.7" font-size="10.72" fill="#666" textLength="96.8" lengthAdjust="spacing">業務サポートツール</text>
<rect x="888.3" y="349.8" width="35.5" height="10.6" fill="rgba(224,36,110,0.1)" stroke="#e0246e" stroke-width="1.8"/>
<text x="930.4" y="357.6" font-size="10.72" fill="#666" textLength="129.0" lengthAdjust="spacing">メディア・デザインツール</text>
<line x1="741.3" y1="792.2" x2="1219.8" y2="791.5" stroke="#e0246e" stroke-width="1.8"/>
<circle cx="741.3" cy="792.2" r="0.3" fill="rgba(224,36,110,0.13)" stroke="#e0246e" stroke-width="1.8"/>
<circle cx="1219.8" cy="791.5" r="0.3" fill="rgba(224,36,110,0.13)" stroke="#e0246e" stroke-width="1.8"/>
<line x1="741.3" y1="783.6" x2="1219.8" y2="789.7" stroke="#5d4037" stroke-width="1.8"/>
<circle cx="741.3" cy="783.6" r="0.8" fill="rgba(93,64,55,0.13)" stroke="#5d4037" stroke-width="1.8"/>
<circle cx="1219.8" cy="789.7" r="0.6" fill="rgba(93,64,55,0.13)" stroke="#5d4037" stroke-width="1.8"/>
<line x1="741.3" y1="768.3" x2="1219.8" y2="776.8" stroke="#fbc02d" stroke-width="1.8"/>
<circle cx="741.3" cy="768.3" r="1.7" fill="rgba(251,192,45,0.13)" stroke="#fbc02d" stroke-width="1.8"/>
<circle cx="1219.8" cy="776.8" r="1.5" fill="rgba(251,192,45,0.13)" stroke="#fbc02d" stroke-width="1.8"/>
<line x1="741.3" y1="757.0" x2="1219.8" y2="770.7" stroke="#5a9632" stroke-width="1.8"/>
<circle cx="741.3" cy="757.0" r="2.5" fill="rgba(90,150,50,0.13)" stroke="#5a9632" stroke-width="1.8"/>
<circle cx="1219.8" cy="770.7" r="2.0" fill="rgba(90,150,50,0.13)" stroke="#5a9632" stroke-width="1.8"/>
<line x1="741.3" y1="766.2" x2="1219.8" y2="754.3" stroke="#3f51b5" stroke-width="1.8"/>
<circle cx="741.3" cy="766.2" r="2.0" fill="rgba(63,81,181,0.13)" stroke="#3f51b5" stroke-width="1.8"/>
<circle cx="1219.8" cy="754.3" r="2.7" fill="rgba(63,81,181,0.13)" stroke="#3f51b5" stroke-width="1.8"/>
<line x1="741.3" y1="729.8" x2="1219.8" y2="734.2" stroke="#1a7fd0" stroke-width="1.8"/>
<circle cx="741.3" cy="729.8" r="4.0" fill="rgba(26,127,208,0.13)" stroke="#1a7fd0" stroke-width="1.8"/>
<circle cx="1219.8" cy="734.2" r="3.7" fill="rgba(26,127,208,0.13)" stroke="#1a7fd0" stroke-width="1.8"/>
<line x1="741.3" y1="721.6" x2="1219.8" y2="728.1" stroke="#d32f2f" stroke-width="1.8"/>
<circle cx="741.3" cy="721.6" r="4.3" fill="rgba(211,47,47,0.13)" stroke="#d32f2f" stroke-width="1.8"/>
<circle cx="1219.8" cy="728.1" r="4.0" fill="rgba(211,47,47,0.13)" stroke="#d32f2f" stroke-width="1.8"/>
<line x1="741.3" y1="686.2" x2="1219.8" y2="698.1" stroke="#0e8a96" stroke-width="1.8"/>
<circle cx="741.3" cy="686.2" r="6.0" fill="rgba(14,138,150,0.13)" stroke="#0e8a96" stroke-width="1.8"/>
<circle cx="1219.8" cy="698.1" r="5.5" fill="rgba(14,138,150,0.13)" stroke="#0e8a96" stroke-width="1.8"/>
<line x1="741.3" y1="663.0" x2="1219.8" y2="681.1" stroke="#7b1fa2" stroke-width="1.8"/>
<circle cx="741.3" cy="663.0" r="7.3" fill="rgba(123,31,162,0.13)" stroke="#7b1fa2" stroke-width="1.8"/>
<circle cx="1219.8" cy="681.1" r="6.5" fill="rgba(123,31,162,0.13)" stroke="#7b1fa2" stroke-width="1.8"/>
<line x1="741.3" y1="440.8" x2="1219.8" y2="385.2" stroke="#b8860b" stroke-width="1.8"/>
<circle cx="741.3" cy="440.8" r="18.2" fill="rgba(184,134,11,0.13)" stroke="#b8860b" stroke-width="1.8"/>
<circle cx="1219.8" cy="385.2" r="18.2" fill="rgba(184,134,11,0.13)" stroke="#b8860b" stroke-width="1.8"/>
</svg>
</div>
<div class="card" id="p3" style="left:1284px;top:223px;width:590px;height:720px;overflow:hidden">
<div class="h2" id="h3" style="left:22.5px;top:19.5px;letter-spacing:.25px">Task Summary</div>
<svg class="info" style="left:164.5px;top:28px" viewBox="0 0 16 16"><path d="M8 15A7 7 0 1 1 8 1a7 7 0 0 1 0 14m0 1A8 8 0 1 0 8 0a8 8 0 0 0 0 16"/><path d="m8.93 6.588-2.29.287-.082.38.45.083c.294.07.352.176.288.469l-.738 3.468c-.194.897.105 1.319.808 1.319.545 0 1.178-.252 1.465-.598l.088-.416c-.2.176-.492.246-.686.246-.275 0-.375-.193-.304-.533zM9 4.5a1 1 0 1 1-2 0 1 1 0 0 1 2 0"/></svg>
<div class="t" id="sub" style="left:22.5px;top:56px;font-size:14.4px;line-height:20px;font-weight:700;color:#111827;letter-spacing:.15px">Top 30 by Current Time (Word Cloud)</div>
<div class="abs" style="left:22px;top:82px;width:544px;height:186px;background:#f8f9fa;border-radius:8px"></div>
<div class="abs tag" style="left:83.8px;top:100.1px;width:78.1px;height:54.9px;background:#0d6efd;border-radius:8px;box-shadow:0 2px 4px rgba(0,0,0,.1);padding:8px 0 0 11.4px;color:#fff"><div id="tg0" style="display:block;font-size:16px;line-height:20px;font-weight:700;white-space:nowrap;letter-spacing:0px">PC休止</div><div id="tv0" style="display:block;font-size:15px;line-height:23px;color:rgba(255,255,255,.85);white-space:nowrap;letter-spacing:0px;-webkit-text-stroke:0.15px rgba(255,255,255,.85)">1049.3h</div></div>
<div class="abs tag" style="left:169.0px;top:106.9px;width:66.0px;height:41.0px;background:#6c757d;border-radius:8px;box-shadow:0 2px 4px rgba(0,0,0,.1);padding:4px 0 0 11.4px;color:#fff"><div id="tg1" style="display:block;font-size:11.0px;line-height:15px;font-weight:700;white-space:nowrap;letter-spacing:-0.2px">システム</div><div id="tv1" style="display:block;font-size:9.3px;line-height:20px;color:rgba(255,255,255,.85);white-space:nowrap;letter-spacing:0.45px;-webkit-text-stroke:0.15px rgba(255,255,255,.85)">90.4h</div></div>
<div class="abs tag" style="left:242.2px;top:106.9px;width:75.8px;height:41.0px;background:#ffc107;border-radius:8px;box-shadow:0 2px 4px rgba(0,0,0,.1);padding:4px 0 0 11.4px;color:#fff"><div id="tg2" style="display:block;font-size:11.0px;line-height:15px;font-weight:700;white-space:nowrap;letter-spacing:-0.2px">ワンノート</div><div id="tv2" style="display:block;font-size:9.3px;line-height:20px;color:rgba(255,255,255,.85);white-space:nowrap;letter-spacing:0.45px;-webkit-text-stroke:0.15px rgba(255,255,255,.85)">58.5h</div></div>
<div class="abs tag" style="left:325.8px;top:106.9px;width:65.0px;height:41.0px;background:#0dcaf0;border-radius:8px;box-shadow:0 2px 4px rgba(0,0,0,.1);padding:4px 0 0 11.4px;color:#fff"><div id="tg3" style="display:block;font-size:10.9px;line-height:15px;font-weight:700;white-space:nowrap;letter-spacing:0px">explorer</div><div id="tv3" style="display:block;font-size:9.3px;line-height:20px;color:rgba(255,255,255,.85);white-space:nowrap;letter-spacing:0.45px;-webkit-text-stroke:0.15px rgba(255,255,255,.85)">57.1h</div></div>
<div class="abs tag" style="left:398.0px;top:106.9px;width:106.0px;height:41.0px;background:#dc3545;border-radius:8px;box-shadow:0 2px 4px rgba(0,0,0,.1);padding:4px 0 0 11.4px;color:#fff"><div id="tg4" style="display:block;font-size:10.9px;line-height:15px;font-weight:700;white-space:nowrap;letter-spacing:0px">LockingWindow</div><div id="tv4" style="display:block;font-size:9.3px;line-height:20px;color:rgba(255,255,255,.85);white-space:nowrap;letter-spacing:0.45px;-webkit-text-stroke:0.15px rgba(255,255,255,.85)">43.1h</div></div>
<div class="abs tag" style="left:57.4px;top:162.2px;width:97.6px;height:40.7px;background:#f8f9fa;border-radius:8px;box-shadow:0 2px 4px rgba(0,0,0,.07);padding:4px 0 0 11.4px;color:#212529"><div id="tg5" style="display:block;font-size:10.7px;line-height:15px;font-weight:400;white-space:nowrap;letter-spacing:-0.5px">チームチャネル</div><div id="tv5" style="display:block;font-size:9.3px;line-height:20px;color:#6c757d;white-space:nowrap;letter-spacing:0.45px;-webkit-text-stroke:0px #6c757d">28.5h</div></div>
<div class="abs tag" style="left:162.8px;top:162.2px;width:86.9px;height:40.7px;background:#0d6efd;border-radius:8px;box-shadow:0 2px 4px rgba(0,0,0,.1);padding:4px 0 0 11.4px;color:#fff"><div id="tg6" style="display:block;font-size:10.7px;line-height:15px;font-weight:700;white-space:nowrap;letter-spacing:-0.5px">受信ボックス</div><div id="tv6" style="display:block;font-size:9.3px;line-height:20px;color:rgba(255,255,255,.85);white-space:nowrap;letter-spacing:0.45px;-webkit-text-stroke:0.15px rgba(255,255,255,.85)">26.3h</div></div>
<div class="abs tag" style="left:257.1px;top:162.2px;width:65.8px;height:40.7px;background:#6c757d;border-radius:8px;box-shadow:0 2px 4px rgba(0,0,0,.1);padding:4px 0 0 11.4px;color:#fff"><div id="tg7" style="display:block;font-size:10.7px;line-height:15px;font-weight:700;white-space:nowrap;letter-spacing:-0.5px">確定累計</div><div id="tv7" style="display:block;font-size:9.3px;line-height:20px;color:rgba(255,255,255,.85);white-space:nowrap;letter-spacing:0.45px;-webkit-text-stroke:0.15px rgba(255,255,255,.85)">26.3h</div></div>
<div class="abs tag" style="left:331.0px;top:162.2px;width:47.8px;height:40.7px;background:#ffc107;border-radius:8px;box-shadow:0 2px 4px rgba(0,0,0,.1);padding:4px 0 0 11.4px;color:#fff"><div id="tg8" style="display:block;font-size:10.7px;line-height:15px;font-weight:700;white-space:nowrap;letter-spacing:0px">AKT</div><div id="tv8" style="display:block;font-size:9.3px;line-height:20px;color:rgba(255,255,255,.85);white-space:nowrap;letter-spacing:0.45px;-webkit-text-stroke:0.15px rgba(255,255,255,.85)">25.8h</div></div>
<div class="abs tag" style="left:386.0px;top:162.2px;width:90.7px;height:40.7px;background:#0dcaf0;border-radius:8px;box-shadow:0 2px 4px rgba(0,0,0,.1);padding:4px 0 0 11.4px;color:#fff"><div id="tg9" style="display:block;font-size:10.7px;line-height:15px;font-weight:700;white-space:nowrap;letter-spacing:0px">InsightBuddy</div><div id="tv9" style="display:block;font-size:9.3px;line-height:20px;color:rgba(255,255,255,.85);white-space:nowrap;letter-spacing:0.45px;-webkit-text-stroke:0.15px rgba(255,255,255,.85)">23h</div></div>
<div class="abs tag" style="left:483.8px;top:162.2px;width:46.9px;height:40.7px;background:#dc3545;border-radius:8px;box-shadow:0 2px 4px rgba(0,0,0,.1);padding:4px 0 0 11.4px;color:#fff"><div id="tg10" style="display:block;font-size:10.7px;line-height:15px;font-weight:700;white-space:nowrap;letter-spacing:0px">Qv</div><div id="tv10" style="display:block;font-size:9.3px;line-height:20px;color:rgba(255,255,255,.85);white-space:nowrap;letter-spacing:0.45px;-webkit-text-stroke:0.15px rgba(255,255,255,.85)">21.9h</div></div>
<div class="abs tag" style="left:153.4px;top:210.0px;width:65.4px;height:39.7px;background:#f8f9fa;border-radius:8px;box-shadow:0 2px 4px rgba(0,0,0,.07);padding:4px 0 0 11.4px;color:#212529"><div id="tg11" style="display:block;font-size:10.7px;line-height:15px;font-weight:400;white-space:nowrap;letter-spacing:-0.5px">工数メモ</div><div id="tv11" style="display:block;font-size:9.3px;line-height:18px;color:#6c757d;white-space:nowrap;letter-spacing:0.45px;-webkit-text-stroke:0px #6c757d">20.8h</div></div>
<div class="abs tag" style="left:225.9px;top:210.0px;width:59.9px;height:39.7px;background:#0d6efd;border-radius:8px;box-shadow:0 2px 4px rgba(0,0,0,.1);padding:4px 0 0 11.4px;color:#fff"><div id="tg12" style="display:block;font-size:10.7px;line-height:15px;font-weight:700;white-space:nowrap;letter-spacing:-0.5px">HS営業</div><div id="tv12" style="display:block;font-size:9.3px;line-height:18px;color:rgba(255,255,255,.85);white-space:nowrap;letter-spacing:0.45px;-webkit-text-stroke:0.15px rgba(255,255,255,.85)">20.3h</div></div>
<div class="abs tag" style="left:292.9px;top:210.0px;width:56.9px;height:39.7px;background:#6c757d;border-radius:8px;box-shadow:0 2px 4px rgba(0,0,0,.1);padding:4px 0 0 11.4px;color:#fff"><div id="tg13" style="display:block;font-size:10.7px;line-height:15px;font-weight:700;white-space:nowrap;letter-spacing:0px">IB Link</div><div id="tv13" style="display:block;font-size:9.3px;line-height:18px;color:rgba(255,255,255,.85);white-space:nowrap;letter-spacing:0.45px;-webkit-text-stroke:0.15px rgba(255,255,255,.85)">19.8h</div></div>
<div class="abs tag" style="left:357.0px;top:210.0px;width:78.7px;height:39.7px;background:#ffc107;border-radius:8px;box-shadow:0 2px 4px rgba(0,0,0,.1);padding:4px 0 0 11.4px;color:#fff"><div id="tg14" style="display:block;font-size:10.7px;line-height:15px;font-weight:700;white-space:nowrap;letter-spacing:0px">HCL Notes</div><div id="tv14" style="display:block;font-size:9.3px;line-height:18px;color:rgba(255,255,255,.85);white-space:nowrap;letter-spacing:0.45px;-webkit-text-stroke:0.15px rgba(255,255,255,.85)">19.3h</div></div>
<div class="t th" id="thi" style="left:22px;top:289.5px;letter-spacing:.28px">Top 10 Increased</div>
<div class="t th" id="thd" style="left:305px;top:289.5px;letter-spacing:.3px">Top 10 Decreased</div>
<div class="t tn" style="left:22px;top:325.7px">PC休止</div>
<div class="t tv" style="right:305px;top:325.7px;color:#212529">+289.0</div>
<div class="abs" style="left:22px;top:358px;width:261px;height:1px;background:#eff1f3"></div>
<div class="t tn" style="left:22px;top:369.9px;letter-spacing:.3px"></div>
<div class="t tv" style="right:305px;top:369.9px;color:#212529">+42.0</div>
<div class="abs" style="left:22px;top:403px;width:261px;height:1px;background:#eff1f3"></div>
<div class="t tn" style="left:22px;top:414.1px">システム</div>
<div class="t tv" style="right:305px;top:414.1px;color:#212529">+29.4</div>
<div class="abs" style="left:22px;top:447px;width:261px;height:1px;background:#eff1f3"></div>
<div class="t tn" style="left:22px;top:458.3px">確定累計</div>
<div class="t tv" style="right:305px;top:458.3px;color:#212529">+21.0</div>
<div class="abs" style="left:22px;top:491px;width:261px;height:1px;background:#eff1f3"></div>
<div class="t tn" style="left:22px;top:502.5px;letter-spacing:.3px">IB Link</div>
<div class="t tv" style="right:305px;top:502.5px;color:#212529">+19.8</div>
<div class="abs" style="left:22px;top:535px;width:261px;height:1px;background:#eff1f3"></div>
<div class="t tn" style="left:22px;top:546.7px;letter-spacing:.3px"></div>
<div class="t tv" style="right:305px;top:546.7px;color:#212529">+17.1</div>
<div class="abs" style="left:22px;top:579px;width:261px;height:1px;background:#eff1f3"></div>
<div class="t tn" style="left:22px;top:590.9px;letter-spacing:.3px"></div>
<div class="t tv" style="right:305px;top:590.9px;color:#212529">+11.9</div>
<div class="abs" style="left:22px;top:624px;width:261px;height:1px;background:#eff1f3"></div>
<div class="t tn" style="left:22px;top:635.1px;letter-spacing:.3px">AKT</div>
<div class="t tv" style="right:305px;top:635.1px;color:#212529">+11.4</div>
<div class="abs" style="left:22px;top:668px;width:261px;height:1px;background:#eff1f3"></div>
<div class="t tn" style="left:22px;top:679.3px">補足説明</div>
<div class="t tv" style="right:305px;top:679.3px;color:#212529">+11.0</div>
<div class="abs" style="left:22px;top:712px;width:261px;height:1px;background:#eff1f3"></div>
<div class="t tn" style="left:305px;top:325.7px;letter-spacing:.3px">Copilot</div>
<div class="t tv" style="right:22px;top:325.7px;color:#e5383b">-38.0</div>
<div class="abs" style="left:305px;top:358px;width:261px;height:1px;background:#eff1f3"></div>
<div class="t tn" style="left:305px;top:369.9px;letter-spacing:.3px">Qv</div>
<div class="t tv" style="right:22px;top:369.9px;color:#e5383b">-15.0</div>
<div class="abs" style="left:305px;top:403px;width:261px;height:1px;background:#eff1f3"></div>
<div class="t tn" style="left:305px;top:414.1px">ケア事業</div>
<div class="t tv" style="right:22px;top:414.1px;color:#e5383b">-10.4</div>
<div class="abs" style="left:305px;top:447px;width:261px;height:1px;background:#eff1f3"></div>
<div class="t tn" style="left:305px;top:458.3px">毎日ケア</div>
<div class="t tv" style="right:22px;top:458.3px;color:#e5383b">-9.4</div>
<div class="abs" style="left:305px;top:491px;width:261px;height:1px;background:#eff1f3"></div>
<div class="t tn" style="left:305px;top:502.5px">提案日本</div>
<div class="t tv" style="right:22px;top:502.5px;color:#e5383b">-9.3</div>
<div class="abs" style="left:305px;top:535px;width:261px;height:1px;background:#eff1f3"></div>
<div class="t tn" style="left:305px;top:546.7px">出店リスト</div>
<div class="t tv" style="right:22px;top:546.7px;color:#e5383b">-8.1</div>
<div class="abs" style="left:305px;top:579px;width:261px;height:1px;background:#eff1f3"></div>
<div class="t tn" style="left:305px;top:590.9px;letter-spacing:.3px"></div>
<div class="t tv" style="right:22px;top:590.9px;color:#e5383b">-7.8</div>
<div class="abs" style="left:305px;top:624px;width:261px;height:1px;background:#eff1f3"></div>
<div class="t tn" style="left:305px;top:635.1px;letter-spacing:.3px"></div>
<div class="t tv" style="right:22px;top:635.1px;color:#e5383b">-7.0</div>
<div class="abs" style="left:305px;top:668px;width:261px;height:1px;background:#eff1f3"></div>
<div class="t tn" style="left:305px;top:679.3px">作業セフリーダス</div>
<div class="t tv" style="right:22px;top:679.3px;color:#e5383b">-6.9</div>
<div class="abs" style="left:305px;top:712px;width:261px;height:1px;background:#eff1f3"></div>
</div>
</div>
</body>
</html>
